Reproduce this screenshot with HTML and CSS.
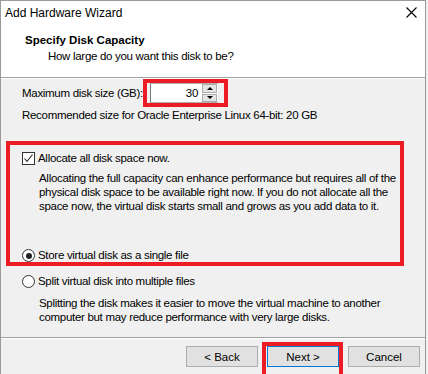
FILE: index.html
```html
<!DOCTYPE html>
<html lang="en">
<head>
  <meta charset="UTF-8" />
  <title>Add Hardware Wizard</title>
  <link rel="stylesheet" href="styles.css">
</head>
<body>
  <div class="window">
    <div class="titlebar">
      <span>Add Hardware Wizard</span>
      <svg class="close" width="11" height="11" viewBox="0 0 11 11">
        <path d="M0.5 0.5 L10.5 10.5 M10.5 0.5 L0.5 10.5" stroke="#000" stroke-width="1.1" fill="none"/>
      </svg>
    </div>

    <div class="header">
      <div class="h-title">Specify Disk Capacity</div>
      <div class="h-sub">How large do you want this disk to be?</div>
    </div>

    <div class="content">
      <div class="size-row">
        <label class="size-label">Maximum disk size (GB):</label>
        <div class="spin">
          <div class="spin-field">30</div>
          <div class="spin-btns">
            <div class="spin-btn"><span class="arrow-up"></span></div>
            <div class="spin-btn"><span class="arrow-down"></span></div>
          </div>
        </div>
      </div>
      <p class="rec">Recommended size for Oracle Enterprise Linux 64-bit: 20 GB</p>

      <div class="option check-row">
        <span class="checkbox">
          <svg width="11" height="11" viewBox="0 0 11 11">
            <path d="M1.5 5.5 L4 8.5 L9.5 1.5" stroke="#222" stroke-width="1.1" fill="none"/>
          </svg>
        </span>
        <span>Allocate all disk space now.</span>
      </div>
      <p class="desc">Allocating the full capacity can enhance performance but requires all of the physical disk space to be available right now. If you do not allocate all the space now, the virtual disk starts small and grows as you add data to it.</p>

      <div class="option radio-row first">
        <span class="radio on"></span>
        <span>Store virtual disk as a single file</span>
      </div>
      <div class="option radio-row second">
        <span class="radio"></span>
        <span>Split virtual disk into multiple files</span>
      </div>
      <p class="desc desc-split">Splitting the disk makes it easier to move the virtual machine to another computer but may reduce performance with very large disks.</p>
    </div>

    <div class="footer">
      <button class="btn">&lt; Back</button>
      <button class="btn default">Next &gt;</button>
      <button class="btn">Cancel</button>
    </div>
  </div>

  <!-- red annotation boxes drawn over the dialog -->
  <div class="mark mark-size"></div>
  <div class="mark mark-alloc"></div>
  <div class="mark mark-next"></div>
</body>
</html>
```

FILE: styles.css
```css
html, body {
  margin: 0;
  padding: 0;
  background: #f0f0f0;
}
body {
  position: relative;
  width: 428px;
  height: 374px;
  overflow: hidden;
  font-family: 'Liberation Sans', Arial, sans-serif;
  font-size: 11.5px;
  letter-spacing: -0.3px;
  color: #000;
}
.window {
  width: 424px;
  height: 380px;
  border: 1px solid #9a9a9a;
  background: #f0f0f0;
  display: flex;
  flex-direction: column;
}
.titlebar {
  height: 23px;
  background: #fff;
  display: flex;
  align-items: center;
  justify-content: space-between;
  padding: 0 8px 0 4px;
  font-size: 12px;
  letter-spacing: 0;
}
.close {
  display: block;
}
.header {
  background: #fff;
  padding: 9px 0 13px 0;
  border-bottom: 1px solid #a0a0a0;
  box-shadow: 0 1px 0 #fff;
}
.h-title {
  font-weight: bold;
  line-height: 15px;
  padding-left: 24px;
  letter-spacing: 0;
}
.h-sub {
  line-height: 15px;
  padding-left: 47px;
  margin-top: 1px;
}
.content {
  padding: 5px 0 0 21px;
  flex: 0 0 auto;
  height: 254px;
}
.size-row {
  display: flex;
  align-items: center;
  height: 20px;
}
.size-label {
  width: 128px;
}
.spin {
  display: flex;
  height: 20px;
}
.spin-field {
  width: 47px;
  height: 18px;
  line-height: 18px;
  background: #fff;
  border: 1px solid #b0b0b0;
  border-left-color: #7a7a7a;
  border-right: none;
  text-align: right;
  padding-right: 4px;
}
.spin-btns {
  width: 16px;
  height: 20px;
  display: flex;
  flex-direction: column;
  gap: 1px;
  background: #fff;
  border-top: 1px solid #b0b0b0;
  border-bottom: 1px solid #b0b0b0;
  box-sizing: border-box;
  padding: 0 1px 0 0;
}
.spin-btn {
  flex: 1;
  background: #e5e5e5;
  border: 1px solid #adadad;
  display: flex;
  align-items: center;
  justify-content: center;
}
.arrow-up, .arrow-down {
  width: 0;
  height: 0;
  border-left: 3px solid transparent;
  border-right: 3px solid transparent;
}
.arrow-up {
  border-bottom: 3px solid #000;
}
.arrow-down {
  border-top: 3px solid #000;
}
.rec {
  margin: 5px 0 0 0;
  line-height: 15px;
}
.option {
  display: flex;
  align-items: center;
  gap: 3px;
  height: 15px;
  line-height: 15px;
}
.check-row {
  margin-top: 28px;
}
.checkbox {
  width: 11px;
  height: 11px;
  border: 1px solid #333;
  background: #fff;
  display: flex;
  align-items: center;
  justify-content: center;
}
.checkbox svg {
  display: block;
}
.desc {
  margin: 5px 0 0 0;
  padding-left: 17px;
  width: 362px;
  line-height: 14px;
}
.radio-row.first {
  margin-top: 35px;
}
.radio-row.second {
  margin-top: 11px;
}
.radio {
  width: 11px;
  height: 11px;
  border: 1px solid #333;
  border-radius: 50%;
  background: #fff;
  position: relative;
}
.radio.on::after {
  content: "";
  position: absolute;
  left: 2.5px;
  top: 2.5px;
  width: 6px;
  height: 6px;
  border-radius: 50%;
  background: #222;
}
.desc-split {
  margin-top: 7px;
}
.footer {
  border-top: 1px solid #a0a0a0;
  box-shadow: inset 0 1px 0 #fff;
  display: flex;
  justify-content: flex-end;
  gap: 9px;
  padding: 8px 5px 0 0;
}
.btn {
  width: 72px;
  height: 21px;
  background: #e1e1e1;
  border: 1px solid #adadad;
  font-family: inherit;
  font-size: 11.5px;
  color: #000;
  padding: 0;
  margin: 0;
}
.btn.default {
  border-color: #0078d7;
}
.mark {
  position: absolute;
  border: 4px solid #ed1c24;
  box-sizing: border-box;
}
.mark-size {
  left: 143px;
  top: 79px;
  width: 85px;
  height: 28px;
}
.mark-alloc {
  left: 6px;
  top: 141px;
  width: 398px;
  height: 125px;
}
.mark-next {
  left: 262px;
  top: 342px;
  width: 81px;
  height: 36px;
}
```
